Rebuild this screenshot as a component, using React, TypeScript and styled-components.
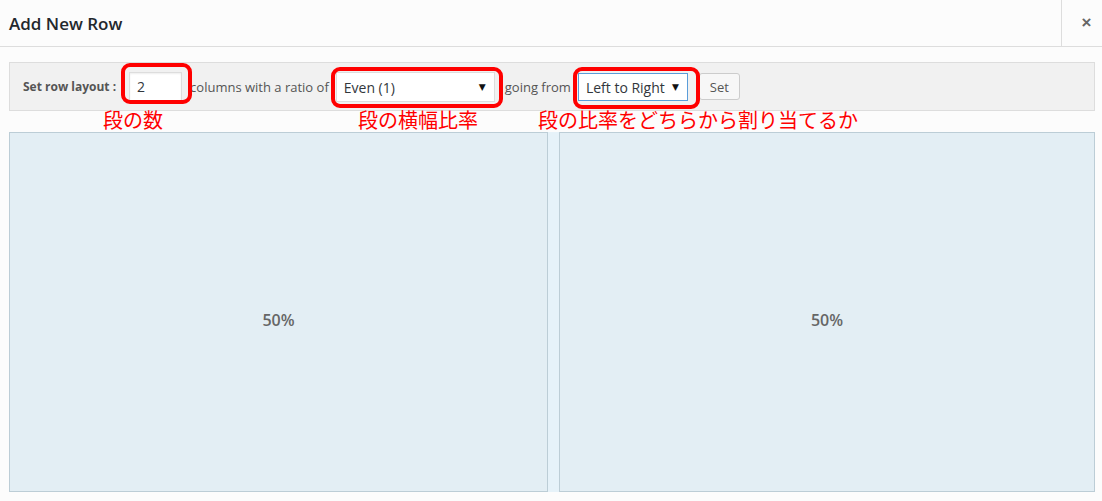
import styled, { createGlobalStyle } from "styled-components";

const GlobalStyle = createGlobalStyle`
  html, body {
    margin: 0;
    padding: 0;
    background: #fcfcfc;
    font-family: "Open Sans", "Noto Sans", sans-serif;
    color: #555;
  }
`;

const Page = styled.div`
  position: relative;
  width: 1102px;
  height: 501px;
  overflow: hidden;
`;

const Header = styled.header`
  height: 46px;
  display: flex;
  align-items: center;
  border-bottom: 1px solid #dddddd;
`;

const Title = styled.h1`
  flex: 1;
  margin: 0;
  padding-left: 9px;
  font-size: 17px;
  font-weight: 600;
  color: #23282d;
`;

const CloseButton = styled.button`
  width: 41px;
  height: 46px;
  border: none;
  border-left: 1px solid #dddddd;
  background: transparent;
  color: #666;
  font-size: 17px;
  font-weight: 700;
  font-family: "Liberation Sans", sans-serif;
  padding: 0 0 0 9px;
  display: flex;
  align-items: center;
  justify-content: center;
`;

const Body = styled.div`
  padding: 15px 7px 0 9px;
`;

const Toolbar = styled.div`
  height: 47px;
  display: flex;
  align-items: center;
  padding-left: 13px;
  background: #f1f1f1;
  border: 1px solid #dddddd;
  font-size: 13px;
`;

const Label = styled.span<{ $bold?: boolean; $gap?: number }>`
  font-weight: ${(p) => (p.$bold ? 700 : 400)};
  font-size: ${(p) => (p.$bold ? 12 : 13)}px;
  margin-right: ${(p) => p.$gap ?? 0}px;
  color: #555;
  white-space: nowrap;
`;

const NumberInput = styled.div`
  box-sizing: border-box;
  width: 53px;
  height: 29px;
  margin-right: 8px;
  padding-left: 7px;
  display: flex;
  align-items: center;
  background: #fff;
  border: 1px solid #dddddd;
  box-shadow: inset 0 1px 2px rgba(0, 0, 0, 0.07);
  font-size: 14px;
  color: #32373c;
`;

const Select = styled.div<{ $width: number; $focus?: boolean; $gap: number }>`
  box-sizing: border-box;
  width: ${(p) => p.$width}px;
  height: ${(p) => (p.$focus ? 28 : 30)}px;
  margin-right: ${(p) => p.$gap}px;
  padding: 1px 8px 0 7px;
  display: flex;
  align-items: center;
  justify-content: space-between;
  background: #fff;
  border: 1px solid ${(p) => (p.$focus ? "#5b9dd9" : "#dddddd")};
  font-size: 14px;
  color: #32373c;
  white-space: nowrap;
`;

const Arrow = styled.span`
  font-size: 9px;
  color: #111;
  font-family: "DejaVu Sans", sans-serif;
`;

const SetButton = styled.button`
  box-sizing: border-box;
  width: 41px;
  height: 27px;
  background: #f7f7f7;
  border: 1px solid #cccccc;
  border-radius: 3px;
  font-family: "Open Sans", sans-serif;
  font-size: 13px;
  color: #555;
  padding: 0;
`;

const Spacer = styled.div`
  height: 21px;
`;

const Columns = styled.div`
  display: flex;
  height: 360px;
  background: #e6f2f9;
`;

const Cell = styled.div<{ $width: number }>`
  box-sizing: border-box;
  width: ${(p) => p.$width}px;
  display: flex;
  align-items: center;
  justify-content: center;
  padding-top: 15px;
  background: #e3eef4;
  border: 1px solid #bccdd6;
  font-size: 16px;
  font-weight: 600;
  color: #666;
`;

const Gutter = styled.div`
  width: 11px;
`;

const Marker = styled.div<{ $x: number; $y: number; $w: number; $h: number }>`
  position: absolute;
  left: ${(p) => p.$x}px;
  top: ${(p) => p.$y}px;
  width: ${(p) => p.$w}px;
  height: ${(p) => p.$h}px;
  box-sizing: border-box;
  border: 4px solid #ff0000;
  border-radius: 9px;
  pointer-events: none;
`;

const Note = styled.div<{ $x: number }>`
  position: absolute;
  left: ${(p) => p.$x}px;
  top: 105px;
  font-family: "Noto Sans CJK JP", sans-serif;
  font-size: 20px;
  color: #ff0000;
  white-space: nowrap;
`;

export default function App() {
  return (
    <Page>
      <GlobalStyle />
      <Header>
        <Title>Add New Row</Title>
        <CloseButton>×</CloseButton>
      </Header>
      <Body>
        <Toolbar>
          <Label $bold $gap={13}>Set row layout :</Label>
          <NumberInput>2</NumberInput>
          <Label $gap={7}>columns with a ratio of</Label>
          <Select $width={159} $gap={10}>
            Even (1)
            <Arrow>▼</Arrow>
          </Select>
          <Label $gap={7}>going from</Label>
          <Select $width={110} $gap={11} $focus>
            Left to Right
            <Arrow>▼</Arrow>
          </Select>
          <SetButton>Set</SetButton>
        </Toolbar>
        <Spacer />
        <Columns>
          <Cell $width={539}>50%</Cell>
          <Gutter />
          <Cell $width={536}>50%</Cell>
        </Columns>
      </Body>
      <Marker $x={121} $y={63} $w={71} $h={41} />
      <Marker $x={331} $y={67} $w={172} $h={41} />
      <Marker $x={573} $y={67} $w={127} $h={42} />
      <Note $x={103}>段の数</Note>
      <Note $x={358}>段の横幅比率</Note>
      <Note $x={538}>段の比率をどちらから割り当てるか</Note>
    </Page>
  );
}
